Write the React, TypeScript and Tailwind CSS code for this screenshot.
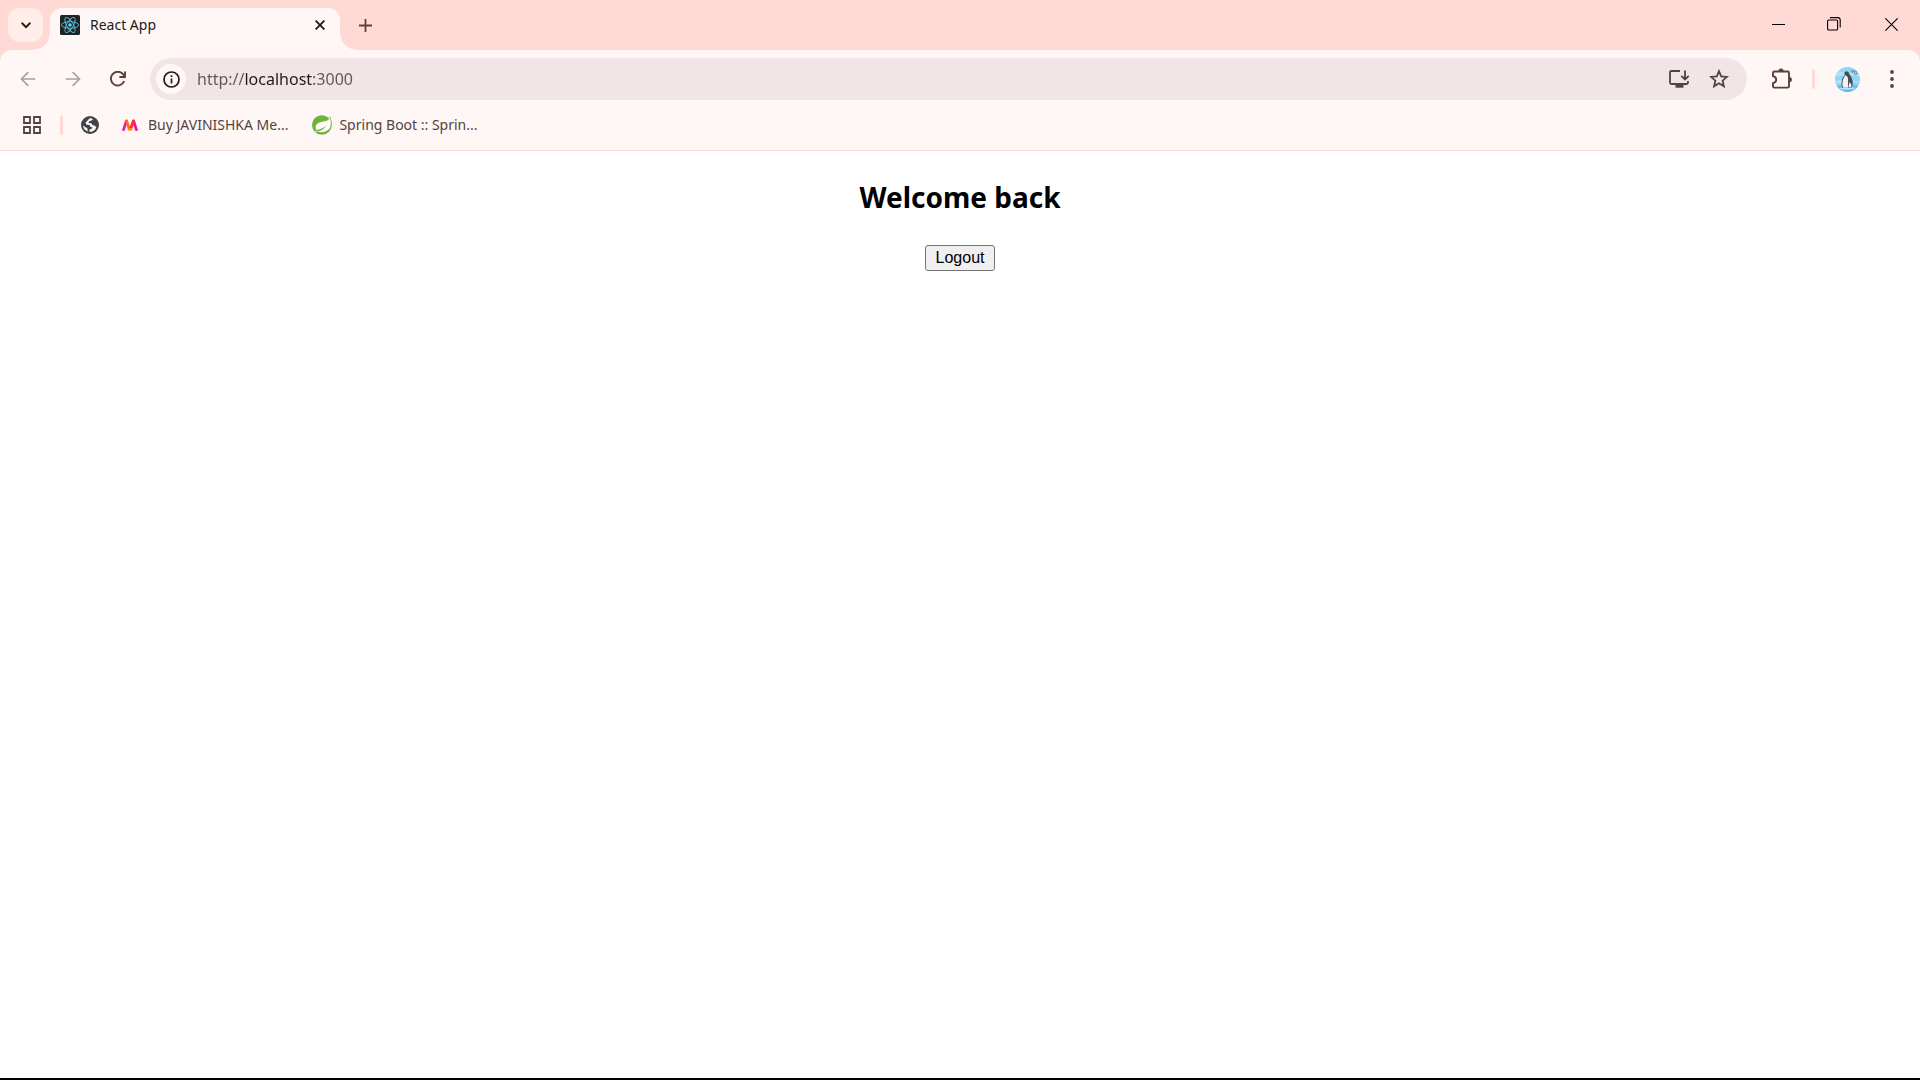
import React from "react";

type IconProps = { className?: string };

function ReactLogo() {
  return (
    <svg viewBox="0 0 20 20" className="size-5 shrink-0" aria-hidden="true">
      <rect width="20" height="20" rx="1.5" fill="#222222" />
      <g fill="none" stroke="#53c1de" strokeWidth="0.9">
        <ellipse cx="10" cy="10" rx="8.6" ry="3.3" />
        <ellipse cx="10" cy="10" rx="8.6" ry="3.3" transform="rotate(60 10 10)" />
        <ellipse cx="10" cy="10" rx="8.6" ry="3.3" transform="rotate(120 10 10)" />
      </g>
      <circle cx="10" cy="10" r="1.7" fill="#61dafb" />
    </svg>
  );
}

function ArrowIcon({ className }: IconProps) {
  return (
    <svg viewBox="0 0 16 16" className={className} fill="none" stroke="currentColor" strokeWidth="1.7" aria-hidden="true">
      <path d="M15.3 8H1.8M8.3 1.2 1.5 8l6.8 6.8" />
    </svg>
  );
}

function ReloadIcon() {
  return (
    <svg viewBox="0 0 16 16" className="size-4" fill="none" stroke="currentColor" strokeWidth="1.9" aria-hidden="true">
      <path d="M14.2 10.2A6.9 6.9 0 1 1 13.2 3.3L14.5 5" />
      <path d="M15 0.6V6H9.4" />
    </svg>
  );
}

function InfoIcon() {
  return (
    <svg viewBox="0 0 17 17" className="size-[17px]" fill="none" stroke="currentColor" strokeWidth="1.7" aria-hidden="true">
      <circle cx="8.5" cy="8.5" r="7.5" />
      <path d="M8.5 7.6v5M8.5 4.3v1.8" />
    </svg>
  );
}

function InstallIcon() {
  return (
    <svg viewBox="0 0 22 20" className="h-5 w-[22px]" fill="none" stroke="currentColor" strokeWidth="1.8" aria-hidden="true">
      <path d="M12 2H3.4Q2 2 2 3.4V13.6Q2 15 3.4 15H18.6Q20 15 20 13.6V12" />
      <path d="M17 1.5V10M13.3 6.8 17 10.4 20.7 6.8" />
      <path d="M7.5 17.2H15.5" strokeWidth="3" />
    </svg>
  );
}

function StarIcon() {
  return (
    <svg viewBox="0 0 20 20" className="size-5" fill="none" stroke="currentColor" strokeWidth="1.8" aria-hidden="true">
      <path d="M10 2.2 12.2 7.4 17.9 7.9 13.6 11.7 14.9 17.3 10 14.3 5.1 17.3 6.4 11.7 2.1 7.9 7.8 7.4Z" />
    </svg>
  );
}

function ExtensionIcon() {
  return (
    <svg viewBox="0 0 22 22" className="size-[22px]" fill="none" stroke="currentColor" strokeWidth="1.9" aria-hidden="true">
      <path d="M3.4 3.5H16.6Q18 3.5 18 4.9V18.2Q18 19.6 16.6 19.6H3.4Q2 19.6 2 18.2V15.2Q5.2 14.3 5.2 11.7 5.2 9 2 8V4.9Q2 3.5 3.4 3.5Z" />
      <path d="M7.4 3.2a2.6 2.6 0 0 1 5.2 0ZM18.3 9a2.6 2.6 0 0 1 0 5.2Z" fill="currentColor" stroke="none" />
    </svg>
  );
}

function PenguinAvatar() {
  return (
    <svg viewBox="0 0 25 25" className="size-[25px]" aria-hidden="true">
      <defs>
        <clipPath id="avatar-disc">
          <circle cx="12.5" cy="12.5" r="12.5" />
        </clipPath>
      </defs>
      <g clipPath="url(#avatar-disc)">
        <rect width="25" height="25" fill="#8dd6f4" />
        <path d="M0 6Q8 3 25 7V9Q10 7 0 10ZM0 14Q10 11 25 15V16Q12 14 0 17Z" fill="#aee3f8" />
        <path d="M0 19Q14 17 25 19V25H0Z" fill="#62bdec" />
        <path d="M4 21Q12 19 21 21L17 22.5H7Z" fill="#b9e6fa" />
        <path d="M9 6.4Q10 4 12.4 4.4 14.4 4.9 14.5 7.6 17.6 11 17.7 16 17.6 19.4 16.3 21H7.2Q6 17 7 12.6 8 9.6 9.9 8Z" fill="#454c59" />
        <path d="M10.4 8.2Q13.4 9.4 13.1 13 12.8 18 13.2 20.8H8Q6.8 16.5 7.9 13 8.8 10 10.4 8.2ZM14.8 15Q16.8 17.5 16.2 20.6H13.6Q13.4 17 14.8 15Z" fill="#eef2f7" />
        <path d="M8.3 7.2 10 5.9V7.2Z" fill="#e0a03c" />
        <path d="M17 3.2v3M17 4.2h1.8M19.5 5.5a1.3 1.3 0 1 0 2.4 0 1.3 1.3 0 1 0-2.4 0" fill="none" stroke="#66798a" strokeWidth="0.9" />
      </g>
    </svg>
  );
}

function AppsIcon() {
  return (
    <svg viewBox="0 0 18 18" className="size-[18px]" fill="none" stroke="currentColor" strokeWidth="1.8" aria-hidden="true">
      <path d="M1 1H7V7H1ZM11 1H17V7H11ZM1 11H7V17H1ZM11 11H17V17H11Z" />
    </svg>
  );
}

function GlobeIcon() {
  return (
    <svg viewBox="0 0 18 18" className="size-[18px]" aria-hidden="true">
      <circle cx="9" cy="9" r="9" fill="#3f4448" />
      <path d="M8.6 2.2Q11 2 12 3.4L10.6 4.6 8.2 5.2 7.4 7 10.4 7.2 11.6 9.2 13.6 9.6 15.4 11.6Q14 15 11 15.8L8 15.4 8.8 13.4 11 12.6 11.4 11.4 9.4 10.8 8.6 9 5.2 8.6 4.6 6.6 6.4 4.8Z" fill="#fff7f5" />
      <path d="M2 9.4 5 11.6 6.4 12.4 6.8 15.4Q2.6 13.8 2 9.4Z" fill="#fff7f5" />
    </svg>
  );
}

function MyntraLogo() {
  return (
    <svg viewBox="0 0 16 12" className="h-3 w-4" fill="none" strokeLinecap="round" aria-hidden="true">
      <path d="M1.6 10.6 4.4 2" stroke="#f416a5" strokeWidth="2.8" />
      <path d="M14.4 10.6 11.6 2" stroke="#f0139b" strokeWidth="2.8" />
      <path d="M4.6 2 7.2 9.8" stroke="#ff6a1f" strokeWidth="2.8" />
      <path d="M11.4 2 8.6 9.8" stroke="#f5331d" strokeWidth="2.8" />
      <path d="M7 10.2H9" stroke="#ff8a00" strokeWidth="2.4" />
    </svg>
  );
}

function SpringLogo() {
  return (
    <svg viewBox="0 0 20 20" className="size-5" aria-hidden="true">
      <circle cx="9.8" cy="10" r="9.8" fill="#6db33f" />
      <path d="M18.2 2.6Q16.6 6 11.4 6.6 4.2 7.6 3.6 11.6 3.4 14 4.6 15 10 14.6 14.4 10.6 10.8 16.2 5 16.6 9.4 17.8 13.4 16.6 18.6 14.6 19 9 19.1 5.6 18.2 2.6Z" fill="#fffaf8" />
      <path d="M17.8 1.4Q20.4 7 19 12.4" fill="none" stroke="#6db33f" strokeWidth="0.8" />
      <circle cx="4" cy="16.6" r="0.8" fill="#fffaf8" />
    </svg>
  );
}

function Tab() {
  return (
    <div className="relative flex h-[42px] w-[290px] items-center self-end rounded-t-xl bg-[#fff7f5] px-2.5 pb-2">
      <span className="absolute -left-4 bottom-0 size-4 bg-[radial-gradient(circle_at_0_0,transparent_15px,#fff7f5_16px)]" />
      <span className="absolute -right-4 bottom-0 size-4 bg-[radial-gradient(circle_at_100%_0,transparent_15px,#fff7f5_16px)]" />
      <ReactLogo />
      <span className="ml-2.5 flex-1 text-sm text-[#231918]">React App</span>
      <button type="button" aria-label="Close tab" className="flex size-5 items-center justify-center text-[#231918]">
        <svg viewBox="0 0 10 10" className="size-2.5" fill="none" stroke="currentColor" strokeWidth="1.9" aria-hidden="true">
          <path d="M0.6 0.6 9.4 9.4M9.4 0.6 0.6 9.4" />
        </svg>
      </button>
    </div>
  );
}

function TabStrip() {
  return (
    <header className="flex h-[50px] items-start bg-[#ffdad4] pl-2">
      <button type="button" aria-label="Search tabs" className="mt-2 mr-[7px] flex h-[34px] w-[35px] items-center justify-center rounded-xl bg-[#ffedea] text-[#231918]">
        <svg viewBox="0 0 10 7" className="h-[7px] w-2.5" fill="none" stroke="currentColor" strokeWidth="2" aria-hidden="true">
          <path d="M0.6 0.8 5 5.2 9.4 0.8" />
        </svg>
      </button>
      <Tab />
      <button type="button" aria-label="New tab" className="mt-2 ml-2 flex size-[34px] items-center justify-center text-[#5d403c]">
        <svg viewBox="0 0 13 13" className="size-[13px]" fill="none" stroke="currentColor" strokeWidth="1.8" aria-hidden="true">
          <path d="M6.5 0V13M0 6.5H13" />
        </svg>
      </button>
      <div className="ml-auto flex h-12 text-black">
        <button type="button" aria-label="Minimize" className="flex w-14 items-center justify-center">
          <span className="h-px w-[13px] bg-black" />
        </button>
        <button type="button" aria-label="Restore" className="flex w-14 items-center justify-center">
          <svg viewBox="0 0 14 14" className="size-3.5" fill="none" stroke="currentColor" strokeWidth="1.1" aria-hidden="true">
            <rect x="0.6" y="3" width="10" height="10" rx="1" />
            <path d="M3 0.6H10.8Q13.2 0.6 13.2 3V10.6" />
          </svg>
        </button>
        <button type="button" aria-label="Close" className="flex w-[58px] items-center justify-center">
          <svg viewBox="0 0 13 13" className="size-[13px]" fill="none" stroke="currentColor" strokeWidth="1.1" aria-hidden="true">
            <path d="M0.3 0.3 12.7 12.7M12.7 0.3 0.3 12.7" />
          </svg>
        </button>
      </div>
    </header>
  );
}

function Toolbar() {
  return (
    <div className="flex h-[58px] items-center pr-[19px] pl-[5px] text-[#5d403c]">
      <button type="button" aria-label="Back" className="flex w-[45px] justify-center text-[#ae9f9c]">
        <ArrowIcon className="size-4" />
      </button>
      <button type="button" aria-label="Forward" className="flex w-[45px] justify-center text-[#ae9f9c]">
        <ArrowIcon className="size-4 rotate-180" />
      </button>
      <button type="button" aria-label="Reload" className="flex w-[45px] justify-center">
        <ReloadIcon />
      </button>
      <div className="ml-2.5 flex h-[42px] flex-1 items-center rounded-full bg-[#f2e5e7] pr-[18px] pl-1.5 text-[#524342]">
        <button type="button" aria-label="View site information" className="flex size-[30px] items-center justify-center rounded-full bg-[#fff7f5] text-[#231918]">
          <InfoIcon />
        </button>
        <input
          type="text"
          aria-label="Address"
          defaultValue="http://localhost:3000"
          className="ml-[11px] min-w-0 flex-1 bg-[linear-gradient(90deg,#655452_48px,#231918_48px,#231918_115px,#655452_115px)] bg-clip-text text-base text-transparent caret-black outline-none"
        />
        <button type="button" aria-label="Install app" className="mr-[19px]">
          <InstallIcon />
        </button>
        <button type="button" aria-label="Bookmark this tab">
          <StarIcon />
        </button>
      </div>
      <button type="button" aria-label="Extensions" className="ml-6">
        <ExtensionIcon />
      </button>
      <span className="ml-[19px] h-5 w-[3px] rounded-full bg-[#ffdad4]" />
      <button type="button" aria-label="Profile" className="ml-5">
        <PenguinAvatar />
      </button>
      <button type="button" aria-label="Menu" className="ml-[23px] flex w-[18px] justify-center">
        <svg viewBox="0 0 4 18" className="h-[18px] w-1" fill="currentColor" aria-hidden="true">
          <circle cx="2" cy="2" r="1.9" />
          <circle cx="2" cy="9" r="1.9" />
          <circle cx="2" cy="16" r="1.9" />
        </svg>
      </button>
    </div>
  );
}

function BookmarksBar() {
  return (
    <nav className="flex h-[43px] items-start border-b border-[#f9dcd7] pl-[23px] text-sm text-[#524342]">
      <div className="flex h-[34px] items-center">
        <button type="button" aria-label="Apps">
          <AppsIcon />
        </button>
        <span className="ml-[19px] h-5 w-[3px] rounded-full bg-[#ffdad4]" />
        <a href="#" aria-label="Website" className="ml-[18px]">
          <GlobeIcon />
        </a>
        <a href="#" className="ml-[23px] flex items-center gap-2.5">
          <MyntraLogo />
          Buy JAVINISHKA Me...
        </a>
        <a href="#" className="ml-6 flex items-center gap-[7px]">
          <SpringLogo />
          Spring Boot :: Sprin...
        </a>
      </div>
    </nav>
  );
}

export default function App() {
  return (
    <div className="flex min-h-screen flex-col border-b-2 border-black bg-white font-['Noto_Sans',sans-serif]">
      <TabStrip />
      <div className="bg-[#ffdad4]">
        <div className="rounded-t-xl bg-[#fff7f5]">
          <Toolbar />
          <BookmarksBar />
        </div>
      </div>
      <main className="flex flex-1 flex-col items-center pt-[26px] text-black">
        <h2 className="text-[28px] leading-10 font-bold">Welcome back</h2>
        <button type="button" className="mt-7 rounded-[3px] border border-[#767676] bg-[#efefef] px-2.5 font-['Liberation_Sans',sans-serif] text-base">
          Logout
        </button>
      </main>
    </div>
  );
}
